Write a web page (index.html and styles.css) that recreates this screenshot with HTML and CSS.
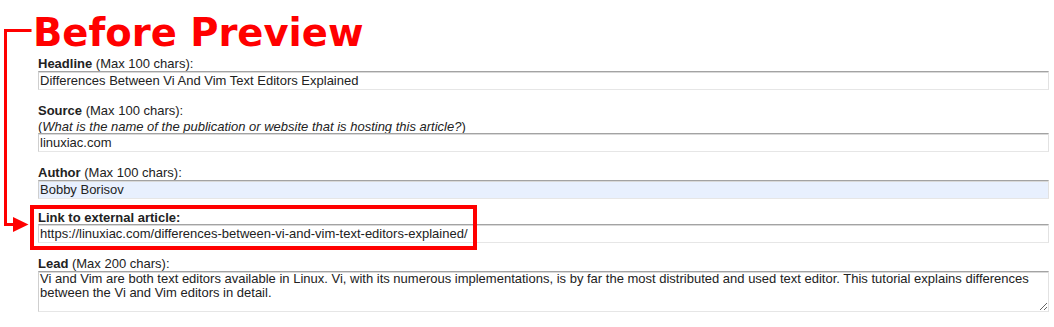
FILE: index.html
```html
<!DOCTYPE html>
<html>
<head>
<meta charset="utf-8">
<link rel="stylesheet" href="styles.css">
</head>
<body>
<div class="page">
  <h1 class="title">Before Preview</h1>
  <div class="field">
    <label class="lbl"><b>Headline</b> (Max 100 chars):</label>
    <input class="box" type="text" value="Differences Between Vi And Vim Text Editors Explained">
  </div>
  <div class="field">
    <label class="lbl"><b>Source</b> (Max 100 chars):</label>
    <div class="lbl hint">(<i>What is the name of the publication or website that is hosting this article?</i>)</div>
    <input class="box" type="text" value="linuxiac.com">
  </div>
  <div class="field">
    <label class="lbl"><b>Author</b> (Max 100 chars):</label>
    <input class="box autofill" type="text" value="Bobby Borisov">
  </div>
  <div class="field field-link">
    <label class="lbl lbl-tight"><b>Link to external article:</b></label>
    <input class="box" type="text" value="https://linuxiac.com/differences-between-vi-and-vim-text-editors-explained/">
  </div>
  <div class="field">
    <label class="lbl"><b>Lead</b> (Max 200 chars):</label>
    <textarea class="box area">Vi and Vim are both text editors available in Linux. Vi, with its numerous implementations, is by far the most distributed and used text editor. This tutorial explains differences between the Vi and Vim editors in detail.</textarea>
  </div>

  <svg class="bracket" width="40" height="240" viewBox="0 0 40 240">
    <path d="M5.5 30.5 H31.5 M5.5 29 V224.5 H16" fill="none" stroke="#ff0000" stroke-width="3"/>
    <polygon points="13,217 28.5,224.5 13,232" fill="#ff0000"/>
  </svg>
  <div class="highlight"></div>
</div>
</body>
</html>
```
FILE: styles.css
```css
* { box-sizing: border-box; }
html, body { margin: 0; padding: 0; background: #ffffff; }
body { font-family: "Liberation Sans", Arial, sans-serif; font-size: 13px; color: #222222; }
.page {
  position: relative;
  width: 1054px;
  height: 327px;
  padding: 14px 5px 0 38px;
  display: flex;
  flex-direction: column;
  gap: 14px;
}
.title {
  margin: 0 0 -9px -5px;
  font-family: "DejaVu Sans", sans-serif;
  font-weight: bold;
  font-size: 38.5px;
  line-height: 38px;
  color: #ff0000;
}
.field { display: flex; flex-direction: column; }
.lbl { display: block; line-height: 14px; font-size: 13px; color: #222; }
.hint { margin: 2px 0 -1px; }
.lbl-tight { margin-bottom: -1px; }
.lbl b { font-weight: bold; }
.box {
  display: block;
  width: 1011px;
  height: 19px;
  margin: 0;
  padding: 1px 1px;
  font-family: "Liberation Sans", Arial, sans-serif;
  font-size: 13px;
  line-height: 15px;
  color: #222222;
  background: #ffffff;
  border: 1px solid;
  border-color: #a3a3a3 #e2e2e2 #e6e6e6 #cfcfcf;
  box-shadow: inset 0 1px 0 #d9d9d9;
  border-radius: 0;
  outline: none;
}
.autofill { background: #e8f0fe; }
.field-link { margin-top: -2px; }
.area {
  height: 41px;
  resize: vertical;
  overflow: hidden;
  padding: 0 1px;
  line-height: 14px;
}
.bracket { position: absolute; left: 0; top: 0; }
.highlight {
  position: absolute;
  left: 30px;
  top: 205px;
  width: 447px;
  height: 45px;
  border: 4px solid #ff0000;
}
```
